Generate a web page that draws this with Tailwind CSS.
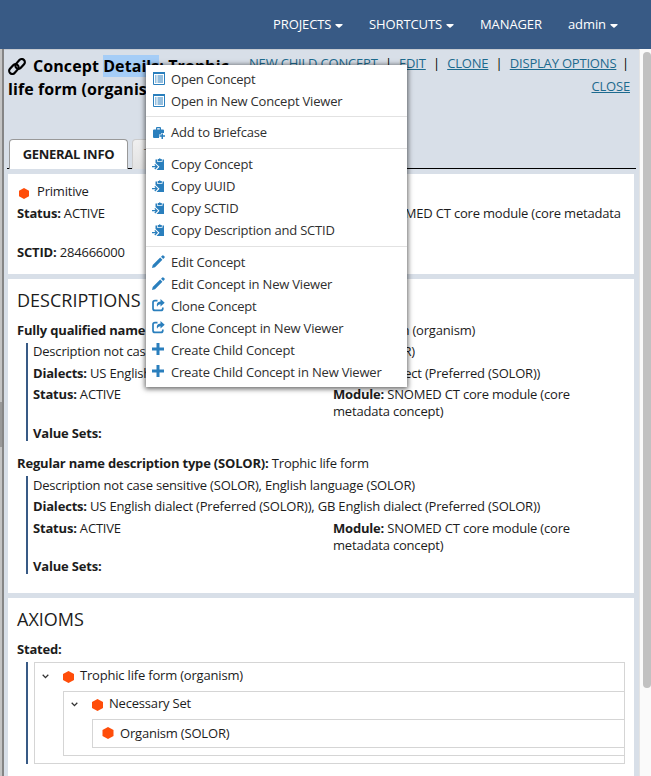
<!DOCTYPE html>
<html lang="en">
<head>
<meta charset="utf-8">
<title>Concept Details</title>
<script src="https://cdn.jsdelivr.net/npm/@tailwindcss/browser@4"></script>
</head>
<body class="w-[651px] h-[776px] overflow-hidden bg-[#fafafa] font-['Open_Sans',sans-serif] text-[13px] tracking-[-0.19px] text-[#1c1c1c]">
<svg class="hidden">
  <symbol id="hex" viewBox="0 0 11 12"><path fill="#ff4d0a" d="M5.5 0 11 3v6l-5.500 3L0 9V3z"/></symbol>
  <symbol id="list" viewBox="0 0 12 13"><path fill="#fff" stroke="#2a7fbd" d="M.5.5h11v12H.5z"/><path fill="#2a7fbd" d="M0 0h12v2H0zM2 3.500h1.500v1H2zM4.500 3.500H10v1H4.500zM2 5.500h1.500v1H2zM4.500 5.500H10v1H4.500zM2 7.500h1.500v1H2zM4.500 7.500H10v1H4.500zM2 9.500h1.500v1H2zM4.500 9.500H10v1H4.500z"/></symbol>
  <symbol id="case" viewBox="0 0 12 12"><path fill="#2a7fbd" fill-rule="evenodd" d="M0 3.500Q0 2.500 1 2.500h2V1q0-1 1-1h3q1 0 1 1v1.500h2q1 0 1 1V6H8v1.500H6V11H1q-1 0-1-1zM4.200 1.200v1.300h2.600V1.200z"/><path fill="#2a7fbd" d="M8.500 6.500H10v1.800h2v1.500h-2V12H8.500V9.800h-2V8.300h2z"/></symbol>
  <symbol id="clip" viewBox="0 0 13 13"><path fill="#2a7fbd" d="M3.500 1.500H5v2.200h5.500V1.500H12V12H4.500l3-3.300L3.500 5z"/><path fill="#2a7fbd" d="M5.700 1h1.100q.9-1.600 1.900 0h1.100v2H5.700z"/><path fill="none" stroke="#2a7fbd" stroke-width="1.300" d="M0 8.700h4.800M2.800 6.400l2.300 2.300L2.800 11"/></symbol>
  <symbol id="pen" viewBox="0 0 13 13"><path fill="#2a7fbd" d="m0 13 .7-3L8.200 2.600l2.200 2.200-7.400 7.500zM9 1.800 10.400.4q.5-.5 1 0l1.200 1.200q.5.500 0 1L11.200 4z"/></symbol>
  <symbol id="share" viewBox="0 0 13 13"><path fill="none" stroke="#2a7fbd" stroke-width="1.700" d="M5.500 1.600H3Q1 1.600 1 3.600v5.800q0 2 2 2h5.800q2 0 2-2V8.500"/><path fill="#2a7fbd" d="M8.500 0 12.700 3.700 8.500 7.400V5.200Q6 5 5 7.800 3.800 2.800 8.500 2.400z"/></symbol>
  <symbol id="plus" viewBox="0 0 12 12"><path fill="#2a7fbd" d="M4.500 0h3v4.500H12v3H7.500V12h-3V7.500H0v-3h4.500z"/></symbol>
  <symbol id="chev" viewBox="0 0 7 5"><path fill="none" stroke="#333" stroke-width="1.300" d="M.7.8 3.500 3.600 6.300.8"/></symbol>
  <symbol id="caret" viewBox="0 0 8 4"><path fill="#fff" d="M.7 0h6.600q.6.400.2.900L4.600 3.600q-.6.400-1.200 0L.5.9Q.1.400.7 0z"/></symbol>
</svg>

<header class="flex h-[49px] items-center bg-[#385a85] pl-[273px] tracking-[-0.1px] text-white">
  <span class="w-[62px]">PROJECTS</span><svg class="mt-[3px] h-1 w-2"><use href="#caret"/></svg>
  <span class="ml-[26px] w-[77px]">SHORTCUTS</span><svg class="mt-[3px] h-1 w-2"><use href="#caret"/></svg>
  <span class="ml-[26px] w-[88px]">MANAGER</span>
  <span class="w-[42px]">admin</span><svg class="mt-[3px] h-1 w-2"><use href="#caret"/></svg>
</header>

<main class="flex h-[727px]">
  <div class="w-[4px] shrink-0 border-r-2 border-[#858585] bg-[#c4c4c4]"><div class="mt-[353px] h-[45px] w-[2px] bg-[#999]"></div></div>
  <div class="w-[635px] shrink-0 border-t border-[#c5cad1] bg-[#d8dfe8] pl-[4px] pr-[5px]">
    <section class="flex h-[89px] justify-between">
      <h1 class="w-[236px] shrink-0 pt-[5px] text-[16px] font-bold leading-[23px] tracking-[0.08px] text-black"><svg class="mr-[7px] -mt-[3px] inline h-[17px] w-[18px]" viewBox="0 0 18 17" fill="none" stroke="#000" stroke-width="2.200"><g transform="rotate(-48 9 8.500)"><rect x="-.5" y="4.800" width="11" height="6.200" rx="3.100"/><rect x="7.500" y="6" width="11" height="6.200" rx="3.100"/></g></svg>Concept <span class="bg-[#a5cdf7]">Details</span>: Trophic life form (organism)</h1>
      <nav class="w-[385px] pr-[4px] pt-[2px] text-right leading-[23px] text-[#1d6a8e] whitespace-nowrap">
        <div class="flex justify-end"><u>NEW CHILD CONCEPT</u><span class="w-[22px] text-center text-black">|</span><u>EDIT</u><span class="w-[22px] text-center text-black">|</span><u>CLONE</u><span class="w-[22px] text-center text-black">|</span><u>DISPLAY OPTIONS</u><span class="w-[14px] pr-[1px] text-right text-black">|</span></div>
        <u>CLOSE</u>
      </nav>
    </section>
    <div class="-ml-[1px] -mr-[2px] flex h-[30px] items-end">
      <div class="h-px w-[2px] bg-black"></div>
      <div class="h-[30px] w-[119px] rounded-t-[4px] border border-b-0 border-[#999] bg-white text-center font-bold leading-[28px] tracking-[-0.3px]">GENERAL INFO</div>
      <div class="h-px w-[4px] bg-black"></div>
      <div class="h-[30px] w-[100px] rounded-t-[4px] border border-b-0 border-[#ccc] bg-linear-to-b from-[#f0f0f0] to-[#e2e2e2] pl-[11px] leading-[26px] text-[#777]">TREE</div>
      <div class="h-px grow bg-black"></div>
    </div>

    <section class="mt-[5px] h-[100px] bg-white px-[9px] pt-[7px]">
      <div class="flex h-[22px] items-center"><svg class="ml-[2px] mr-[8px] mt-[3px] h-[11px] w-[10px]"><use href="#hex"/></svg>Primitive</div>
      <div class="flex h-[22px] items-center"><div class="w-[307px] shrink-0"><b>Status:</b> ACTIVE</div><div class="whitespace-nowrap"><b>Module:</b> SNOMED CT core module (core metadata</div></div>
      <div class="mt-[16px] h-[22px] leading-[22px]"><b>SCTID:</b> 284666000</div>
    </section>

    <section class="mt-[5px] h-[314px] bg-white px-[9px] pt-[7px]">
      <h2 class="h-[28px] text-[18px] leading-[28px] tracking-normal">DESCRIPTIONS</h2>
      <div class="mt-[5px] h-[23px] leading-[22px]"><b>Fully qualified name description type (SOLOR):</b> Trophic life form (organism)</div>
      <div class="ml-[9px] mt-[1px] h-[98px] border-l-2 border-[#385a85] pl-[5px]">
        <div class="h-[21px] leading-[16px]">Description not case sensitive (SOLOR), English language (SOLOR)</div>
        <div class="h-[22px] leading-[18px]"><b>Dialects:</b> US English dialect (Preferred (SOLOR)), GB English dialect (Preferred (SOLOR))</div>
        <div class="flex h-[38px] leading-[17px]"><div class="w-[300px]"><b>Status:</b> ACTIVE</div><div class="w-[250px]"><b>Module:</b> SNOMED CT core module (core metadata concept)</div></div>
        <b class="block leading-[18px]">Value Sets:</b>
      </div>
      <div class="mt-[12px] h-[22px] leading-[20px]"><b>Regular name description type (SOLOR):</b> Trophic life form</div>
      <div class="ml-[9px] mt-[1px] h-[98px] border-l-2 border-[#385a85] pl-[5px]">
        <div class="h-[22px] leading-[18px]">Description not case sensitive (SOLOR), English language (SOLOR)</div>
        <div class="h-[22px] leading-[16px]"><b>Dialects:</b> US English dialect (Preferred (SOLOR)), GB English dialect (Preferred (SOLOR))</div>
        <div class="flex h-[37px] leading-[17px]"><div class="w-[300px]"><b>Status:</b> ACTIVE</div><div class="w-[250px]"><b>Module:</b> SNOMED CT core module (core metadata concept)</div></div>
        <b class="block leading-[18px]">Value Sets:</b>
      </div>
    </section>

    <section class="mt-[5px] h-[178px] bg-white px-[9px] pt-[7px]">
      <h2 class="h-[28px] text-[18px] leading-[28px] tracking-normal">AXIOMS</h2>
      <b class="mt-[5px] block h-[24px] leading-[22px]">Stated:</b>
      <div class="ml-[9px] h-[102px] border-l-2 border-[#385a85] pl-[6px]">
        <div class="h-[102px] border border-[#d5d5d5]">
          <div class="flex h-[28px] items-center pb-[2px] pl-[7px]"><svg class="mr-[14px] h-[5px] w-[7px]"><use href="#chev"/></svg><svg class="mr-[6px] mt-[2px] h-[12px] w-[11px]"><use href="#hex"/></svg>Trophic life form (organism)</div>
          <div class="ml-[28px] h-[65px] border border-r-0 border-[#d5d5d5]">
            <div class="flex h-[27px] items-center pb-[3px] pl-[7px]"><svg class="mr-[14px] h-[5px] w-[7px]"><use href="#chev"/></svg><svg class="mr-[6px] mt-[2px] h-[12px] w-[11px]"><use href="#hex"/></svg>Necessary Set</div>
            <div class="ml-[28px] flex h-[29px] items-center border border-r-0 border-[#d5d5d5] pl-[9px]"><svg class="mr-[6px] mb-[2px] h-[12px] w-[12px]"><use href="#hex"/></svg>Organism (SOLOR)</div>
          </div>
        </div>
      </div>
    </section>
  </div>
  <div class="w-[12px] shrink-0 border-l border-[#e4e4e4] bg-[#fafafa] pl-[3px] pt-[3px]"><div class="h-[636px] w-[8px] rounded-full bg-[#c1c1c1]"></div></div>
</main>

<div class="absolute left-[146px] top-[65px] h-[322px] w-[261px] bg-white pt-[4px] text-[#2f2f2f] shadow-[0_1px_5px_1px_rgba(0,0,0,0.6)]">
  <div class="flex h-[22px] items-center pl-[7px]"><svg class="mr-[6px] mb-[4px] h-[13px] w-[12px]"><use href="#list"/></svg>Open Concept</div>
  <div class="flex h-[22px] items-center pl-[7px]"><svg class="mr-[6px] mb-[4px] h-[13px] w-[12px]"><use href="#list"/></svg>Open in New Concept Viewer</div>
  <div class="mb-[5px] mt-[3px] h-px bg-[#e2e2e2]"></div>
  <div class="flex h-[22px] items-center pl-[7px]"><svg class="mr-[6px] h-[12px] w-[12px]"><use href="#case"/></svg>Add to Briefcase</div>
  <div class="mb-[5px] mt-[4px] h-px bg-[#e2e2e2]"></div>
  <div class="flex h-[22px] items-center pl-[6px]"><svg class="mr-[6px] mb-[2px] h-[13px] w-[13px]"><use href="#clip"/></svg>Copy Concept</div>
  <div class="flex h-[22px] items-center pl-[6px]"><svg class="mr-[6px] mb-[2px] h-[13px] w-[13px]"><use href="#clip"/></svg>Copy UUID</div>
  <div class="flex h-[22px] items-center pl-[6px]"><svg class="mr-[6px] mb-[2px] h-[13px] w-[13px]"><use href="#clip"/></svg>Copy SCTID</div>
  <div class="flex h-[22px] items-center pl-[6px]"><svg class="mr-[6px] mb-[2px] h-[13px] w-[13px]"><use href="#clip"/></svg>Copy Description and SCTID</div>
  <div class="mb-[5px] mt-[4px] h-px bg-[#e2e2e2]"></div>
  <div class="flex h-[22px] items-center pl-[6px]"><svg class="mr-[6px] mb-[4px] h-[13px] w-[13px]"><use href="#pen"/></svg>Edit Concept</div>
  <div class="flex h-[22px] items-center pl-[6px]"><svg class="mr-[6px] mb-[4px] h-[13px] w-[13px]"><use href="#pen"/></svg>Edit Concept in New Viewer</div>
  <div class="flex h-[22px] items-center pl-[6px]"><svg class="mr-[6px] mb-[4px] h-[13px] w-[13px]"><use href="#share"/></svg>Clone Concept</div>
  <div class="flex h-[22px] items-center pl-[6px]"><svg class="mr-[6px] mb-[4px] h-[13px] w-[13px]"><use href="#share"/></svg>Clone Concept in New Viewer</div>
  <div class="flex h-[22px] items-center pl-[6px]"><svg class="mr-[7px] mb-[4px] h-[12px] w-[12px]"><use href="#plus"/></svg>Create Child Concept</div>
  <div class="flex h-[22px] items-center pl-[6px]"><svg class="mr-[7px] mb-[4px] h-[12px] w-[12px]"><use href="#plus"/></svg>Create Child Concept in New Viewer</div>
</div>
</body>
</html>
